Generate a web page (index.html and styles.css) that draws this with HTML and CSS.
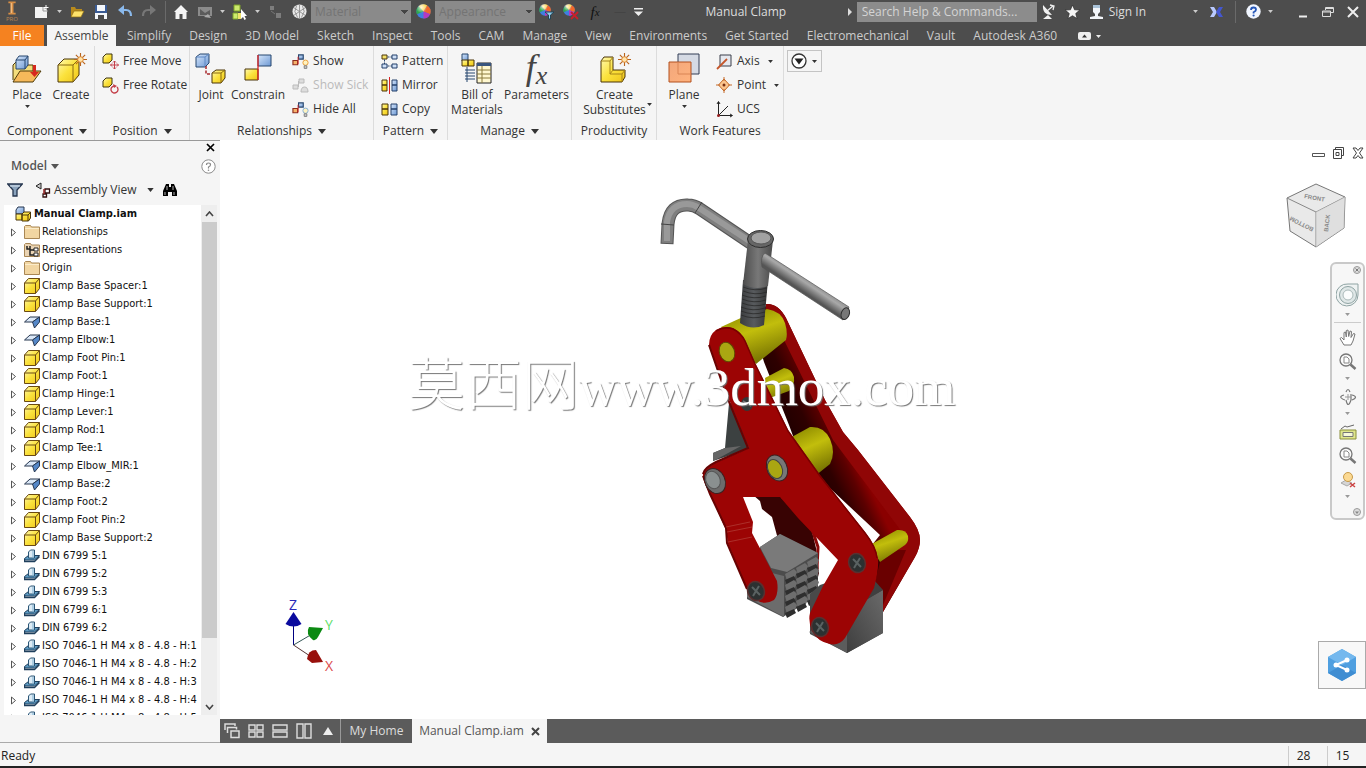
FILE: index.html
```html
<!DOCTYPE html>
<html lang="en">
<head>
<meta charset="utf-8">
<title>Manual Clamp</title>
<link rel="stylesheet" href="styles.css">
</head>
<body>
<svg class="defs" aria-hidden="true">
  <defs>
    <linearGradient id="gy" x1="0" y1="0" x2="1" y2="1"><stop offset="0" stop-color="#fff9b0"/><stop offset=".5" stop-color="#fbe23c"/><stop offset="1" stop-color="#eec31a"/></linearGradient>
    <linearGradient id="gb" x1="0" y1="0" x2="1" y2="1"><stop offset="0" stop-color="#d6e6fa"/><stop offset="1" stop-color="#6c98d4"/></linearGradient>
    <linearGradient id="go" x1="0" y1="0" x2="1" y2="1"><stop offset="0" stop-color="#f2a77c"/><stop offset="1" stop-color="#ffb27d"/></linearGradient>
    <radialGradient id="gs" cx=".4" cy=".3"><stop offset="0" stop-color="#fff"/><stop offset="1" stop-color="#fff" stop-opacity="0"/></radialGradient>
  </defs>
  <symbol id="caret" viewBox="0 0 8 5"><path d="M0 0h8L4 5z" fill="currentColor"/></symbol>
  <symbol id="cube-y" viewBox="0 0 16 16"><path d="M.5 5l4-4.500h11v10l-4 5H.5z" fill="url(#gy)" stroke="#6b4a12"/><path d="M.5 5h11v10.500M11.500 5l4-4.500" fill="none" stroke="#6b4a12"/></symbol>
  <symbol id="sheet" viewBox="0 0 16 16"><path d="M6 3h9.500l-7 5H.5z" fill="#dbe8f7" stroke="#26364f"/><path d="M15.500 3v5l-5 6-2-6z" fill="#5588c8" stroke="#26364f"/></symbol>
  <symbol id="bolt" viewBox="0 0 16 16"><path d="M.5 10.500l4-3h11l-5 4.500H.5z" fill="#5e9cc4" stroke="#1f3f5c"/><path d="M.5 11v2.500h10l5-5" fill="none" stroke="#1f3f5c" stroke-width="1.400"/><path d="M4.500 10V4l2-2h4v8z" fill="#dcebf5" stroke="#2b5575"/><path d="M9 3v7" stroke="#7fb0d0"/></symbol>
  <symbol id="folder" viewBox="0 0 16 16"><path d="M.5 14.500v-12l1-1h5l1 1.500h8v11.500z" fill="#f2d6a2" stroke="#a98755"/><path d="M1 4.500h14" stroke="#fbecca"/></symbol>
  <symbol id="folder-r" viewBox="0 0 16 16"><path d="M.5 14.500v-12l1-1h5l1 1.500h8v11.500z" fill="#ead4b4" stroke="#a98755"/><path d="M3 4v3h3M6 4v9h4M6 8h4" fill="none" stroke="#222" stroke-width="1.500"/><path d="M10 6h4v3h-4zM10 11h4v3h-4z" fill="#fff" stroke="#222"/></symbol>
  <symbol id="asm" viewBox="0 0 16 16"><path d="M1 4l2-3h6v5L7 8H1z" fill="url(#gb)" stroke="#26364f"/><path d="M1 8h6v6H1zM7 8l2-2h6.500v6l-2 3H7z" fill="url(#gy)" stroke="#4a3508"/><path d="M7 9h6v6M13 9l2-2" fill="none" stroke="#4a3508"/></symbol>
  <symbol id="burst" viewBox="0 0 14 14"><path d="M7 0v14M0 7h14M2 2l10 10M12 2L2 12" stroke="#b9641d" stroke-width="1.200"/><circle cx="7" cy="7" r="3" fill="#ffe2a8" stroke="#d9822b"/></symbol>
  <symbol id="links" viewBox="0 0 16 16"><path d="M7 2h5v4.500H7z" fill="url(#gb)" stroke="#27466e" stroke-width="1.200"/><path d="M1 8h5v4.500H1z" fill="#f6b26b" stroke="#8c2a1c" stroke-width="1.200"/><path d="M6.500 4v8" stroke="#c22"/></symbol>
  <symbol id="bulb" viewBox="0 0 8 11"><circle cx="4" cy="4" r="3" fill="#fff3bf" stroke="currentColor"/><path d="M2.500 7.500h3v3h-3z" fill="#ccc" stroke="#777"/></symbol>
  <symbol id="ball" viewBox="0 0 16 16"><circle cx="8" cy="8" r="7.500" fill="#3f7fe0"/><path d="M8 8L1 11A7.500 7.500 0 0 1 3 2.500z" fill="#2fa84f"/><path d="M8 8L3 2.500A7.500 7.500 0 0 1 12 1.500z" fill="#ffd23e"/><path d="M8 8l4-6.500A7.500 7.500 0 0 1 15 11z" fill="#f2682a"/><path d="M8 8l7 3a7.500 7.500 0 0 1-7 4.500z" fill="#b43ac0"/><circle cx="7" cy="6" r="6" fill="url(#gs)" opacity=".8"/></symbol>
  <symbol id="mag" viewBox="0 0 18 18"><circle cx="7" cy="7" r="6" fill="#fafafa" stroke="#777" stroke-width="1.300"/><path d="M5 4h3l2 2v4H5z" fill="#fff" stroke="#888"/><path d="M11.500 11.500l5 4.500" stroke="#777" stroke-width="2.500"/></symbol>
</svg>

<header class="titlebar">
  <div class="qat">
    <button class="logo" aria-label="Inventor menu"><svg width="18" height="22" viewBox="0 0 18 22"><path d="M4 2h10v2.500h-3v13h3V20H4v-2.500h3v-13H4z" fill="#d98f45"/><path d="M8 4v14" stroke="#f7c58a" stroke-width="1.500"/></svg><span>PRO</span></button>
    <button class="qb" aria-label="New"><svg width="16" height="16" viewBox="0 0 16 16"><path d="M1 3h8l4 3v8H1z" fill="#f3f3f3"/><path d="M9 3v4h5" fill="none" stroke="#999"/><path d="M12 1v5M9.500 3.500h5" stroke="#fff"/></svg></button>
    <button class="qc" aria-label="New options"><svg width="5" height="3"><use href="#caret"/></svg></button>
    <button class="qb" aria-label="Open"><svg width="16" height="16" viewBox="0 0 16 16"><path d="M2 13V3h4l1 2h6v3" fill="#b88a1c"/><path d="M5 7h10l-3 6H2z" fill="#ffe36b" stroke="#8c6a12" stroke-width=".7"/></svg></button>
    <button class="qb" aria-label="Save"><svg width="16" height="16" viewBox="0 0 16 16"><path d="M2 1h12v14H2z" fill="#f4f7fb"/><path d="M2 7h12v2H2zM2 1h2v6h8V1h2v8H2z" fill="#3a5b94"/><path d="M5 11h6v4H5z" fill="#4a4a4a"/></svg></button>
    <button class="qb" aria-label="Undo"><svg width="16" height="16" viewBox="0 0 16 16"><path d="M4 6h5q5 0 5 6" fill="none" stroke="#8ab9ec" stroke-width="2.200"/><path d="M7 1v10L1 6z" fill="#8ab9ec"/></svg></button>
    <button class="qb" aria-label="Redo"><svg width="16" height="16" viewBox="0 0 16 16"><path d="M12 6H7q-5 0-5 6" fill="none" stroke="#777" stroke-width="2.200"/><path d="M9 1v10l6-5z" fill="#777"/></svg></button>
    <span class="qsep"></span>
    <button class="qb" aria-label="Home"><svg width="16" height="16" viewBox="0 0 16 16"><path d="M8 1L1 8h1.500v7h4v-5h3v5h4V8H15z" fill="#f4f4f4"/></svg></button>
    <button class="qb" aria-label="Return"><svg width="16" height="16" viewBox="0 0 16 16"><path d="M1 3h14v9H1z" fill="#8b8b8b"/><path d="M3 5l5 4 5-3v5H3z" fill="#5b5b5b"/><path d="M7 13l4-3 3 4z" fill="#aaa"/></svg></button>
    <button class="qc" aria-label="Return options"><svg width="5" height="3"><use href="#caret"/></svg></button>
    <button class="qb" aria-label="Select"><svg width="16" height="16" viewBox="0 0 16 16"><path d="M2 1h6v6H2zM1 9h5v6H1z" fill="#cdea6d" stroke="#7fa32a"/><path d="M6 9h3v6H6z" fill="#efe36b"/><path d="M9 5v10l2-2 1.500 3 1.500-1-1.500-3H15z" fill="#fff"/></svg></button>
    <button class="qc" aria-label="Select options"><svg width="5" height="3"><use href="#caret"/></svg></button>
    <button class="qb" aria-label="Update"><svg width="16" height="16" viewBox="0 0 16 16"><path d="M3 2h4v4H3zM9 9h5v5H9z" fill="#7d7d7d"/><path d="M4 7l4 3" stroke="#777"/></svg></button>
    <button class="qb" aria-label="Material browser"><svg width="15" height="15" viewBox="0 0 16 16"><circle cx="8" cy="8" r="7.500" fill="#e9e9e9"/><path d="M8 1v14M2 4l12 8M14 4L2 12M5 1.500L3 8l3 6.500M11 1.500L13 8l-3 6.500" stroke="#888" fill="none" stroke-width=".9"/></svg></button>
    <select class="pick" aria-label="Material"><option>Material</option></select>
    <button class="qb" aria-label="Appearance browser"><svg width="15" height="15"><use href="#ball"/></svg></button>
    <select class="pick" aria-label="Appearance"><option>Appearance</option></select>
    <button class="qb" aria-label="Adjust"><svg width="16" height="16" viewBox="0 0 16 16"><use href="#ball" width="12" height="12"/><path d="M6 8h9l-3.500 3v4h-2v-4z" fill="#8fd0f2" stroke="#245"/></svg></button>
    <button class="qb" aria-label="Clear"><svg width="16" height="16" viewBox="0 0 16 16"><use href="#ball" width="12" height="12"/><path d="M8 8l7 7M15 8l-7 7" stroke="#c8202a" stroke-width="1.800"/></svg></button>
    <button class="qb fxs" aria-label="Parameters"><i>f</i><sub><i>x</i></sub></button>
    <span class="plus">—</span>
    <button class="qc" aria-label="Customize"><svg width="9" height="8" viewBox="0 0 9 8"><path d="M0 0h9v1.500H0zM0 3.500h9L4.500 8z" fill="#eee"/></svg></button>
  </div>
  <h1 class="doc">Manual Clamp</h1>
  <div class="tr">
    <svg width="4" height="8" viewBox="0 0 4 8"><path d="M0 0l4 4-4 4z" fill="#ddd"/></svg>
    <input class="search" type="search" aria-label="Search" placeholder="Search Help &amp; Commands...">
    <button class="qb" aria-label="Communication"><svg width="15" height="16" viewBox="0 0 15 16"><path d="M2 1q-1 10 9 10L7 6.500zM2 15l5-4 4 4z" fill="#f2f2f2"/><path d="M6 7l6-5M9 1l4 1-1 4" fill="none" stroke="#eee" stroke-width="1.300"/></svg></button>
    <button class="qb" aria-label="Favorites"><svg width="15" height="15" viewBox="0 0 15 15"><path d="M7.500 1l2 4.800 5.200.3-4 3.400 1.300 5-4.500-2.800L3 14.500l1.300-5-4-3.400 5.200-.3z" fill="#f6f6f6" stroke="#222" stroke-width=".6"/></svg></button>
    <button class="signin"><svg width="15" height="16" viewBox="0 0 15 16"><path d="M4 1h7v7l-2 2v2l5 1v2H1v-2l5-1v-2L4 8z" fill="#f3f6fa"/><path d="M4 1h7v3H4z" fill="#a9c2d8"/></svg>Sign In</button>
    <button class="qc" aria-label="Account options"><svg width="5" height="3"><use href="#caret"/></svg></button>
    <button class="qb xch" aria-label="Exchange apps"><svg width="14" height="12" viewBox="0 0 14 12"><path d="M0 1h4l3 5-3 5H0l3-5z" fill="#b9c9ff"/><path d="M13 1h-4L6 6l3 5h4l-3-5z" fill="#4457d0"/></svg></button>
    <span class="qsep"></span>
    <button class="qb" aria-label="Help"><svg width="15" height="15" viewBox="0 0 15 15"><circle cx="7.500" cy="7.500" r="7.200" fill="#f1f6ff"/><path d="M5 6q0-2.500 2.500-2.500T10 5.800Q10 7 7.600 8.200V9.500" fill="none" stroke="#2456b8" stroke-width="1.800"/><circle cx="7.600" cy="11.500" r="1.100" fill="#2456b8"/></svg></button>
    <button class="qc" aria-label="Help options"><svg width="5" height="3"><use href="#caret"/></svg></button>
    <div class="win">
      <button aria-label="Minimize"><svg width="12" height="12" viewBox="0 0 12 12"><path d="M2 10.500h8" stroke="#eee" stroke-width="2"/></svg></button>
      <button aria-label="Restore"><svg width="12" height="12" viewBox="0 0 12 12"><path d="M3.500 4V1.500h8v5H9M.5 5h8v5.500h-8zM.5 6h8M4 2.500h7" fill="none" stroke="#ddd"/></svg></button>
      <button aria-label="Close"><svg width="12" height="12" viewBox="0 0 12 12"><path d="M1 1l10 10M11 1L1 11" stroke="#eee" stroke-width="2"/></svg></button>
    </div>
  </div>
</header>

<nav class="tabs">
  <button class="file">File</button>
  <button class="on">Assemble</button>
  <button>Simplify</button><button>Design</button><button>3D Model</button><button>Sketch</button><button>Inspect</button><button>Tools</button><button>CAM</button><button>Manage</button><button>View</button><button>Environments</button><button>Get Started</button><button>Electromechanical</button><button>Vault</button><button>Autodesk A360</button>
  <button class="mini" aria-label="Minimize ribbon"><svg width="23" height="8" viewBox="0 0 23 8"><rect width="13" height="8" rx="2" fill="#eee"/><path d="M4 5.500l2.500-3 2.500 3z" fill="#333"/><path d="M18 3h5l-2.500 3z" fill="#eee"/></svg></button>
</nav>

<section class="ribbon">
  <div class="panel p1">
    <div class="tools">
      <button class="big"><svg width="32" height="32" viewBox="0 0 32 32"><path d="M2 27V12l3-3h5l3 3h9v7" fill="#f3dd7c" stroke="#4f3b08"/><path d="M9 18h21l-8 11H2z" fill="#f6b95a" stroke="#4f3b08"/><path d="M5 7l3-4h9v9l-3 4H5z" fill="url(#gb)" stroke="#27466e"/><path d="M5 7h9v9M14 7l3-4" fill="none" stroke="#27466e"/><path d="M22 12v7h-3l4.500 5 4.500-5h-3v-7z" fill="#d6281e"/></svg><span>Place</span><svg class="dn" width="5" height="3"><use href="#caret"/></svg></button>
      <button class="big"><svg width="32" height="32" viewBox="0 0 32 32"><path d="M3 12l6-6h15v16l-6 7H3z" fill="url(#gy)" stroke="#4a3508"/><path d="M3 12h15v17M18 12l6-6" fill="none" stroke="#8a6a12"/><use href="#burst" x="19" y="0" width="13" height="13"/></svg><span>Create</span></button>
    </div>
    <button class="cap">Component <svg width="8" height="5"><use href="#caret"/></svg></button>
  </div>
  <div class="panel p2">
    <div class="tools"><div class="rows">
      <button><svg width="17" height="17" viewBox="0 0 17 17"><path d="M1 4l3-3h6v6L7 10H1z" fill="url(#gy)" stroke="#3d3510"/><path d="M12.500 8v8M8.500 12h8M11 9.500l1.500-1.500 1.500 1.500M11 14.500l1.500 1.500 1.500-1.500M10 10.500L8.500 12l1.500 1.500M15 10.500l1.500 1.500-1.500 1.500" stroke="#c4404a" fill="none"/></svg>Free Move</button>
      <button><svg width="17" height="17" viewBox="0 0 17 17"><path d="M1 4l3-3h6v6L7 10H1z" fill="url(#gy)" stroke="#3d3510"/><path d="M12 9a3.500 3.500 0 1 0 3 1" fill="none" stroke="#c4404a" stroke-width="1.300"/><path d="M11 7l4 2-3 2z" fill="#c4404a"/></svg>Free Rotate</button>
    </div></div>
    <button class="cap">Position <svg width="8" height="5"><use href="#caret"/></svg></button>
  </div>
  <div class="panel p3">
    <div class="tools">
      <button class="big"><svg width="32" height="32" viewBox="0 0 32 32"><path d="M1 4l4-3h9v9l-4 4H1z" fill="url(#gb)" stroke="#27466e"/><path d="M1 4h9v10M10 4l4-3" fill="none" stroke="#5f88c4"/><path d="M17 20l4-3h9v8l-4 5h-9z" fill="url(#gy)" stroke="#4a3508"/><path d="M17 20h9v10M26 20l4-3" fill="none" stroke="#8a6a12"/><path d="M11 13v8h5" fill="none" stroke="#a8282c" stroke-width="1.500" stroke-dasharray="3 1.500"/></svg><span>Joint</span></button>
      <button class="big"><svg width="32" height="32" viewBox="0 0 32 32"><path d="M16 2h13v11H16z" fill="url(#gb)" stroke="#27466e"/><path d="M3 16h13v11H3z" fill="url(#gy)" stroke="#4a3508"/><path d="M16 2v25" stroke="#d22" stroke-width="1.300"/></svg><span>Constrain</span></button>
      <div class="rows">
        <button><svg width="17" height="17" viewBox="0 0 17 17"><use href="#links" width="15" height="15"/><use href="#bulb" x="10" y="6" width="7" height="10" class="warm"/></svg>Show</button>
        <button class="off" disabled><svg width="17" height="17" viewBox="0 0 17 17"><path d="M7 2h5v4H7zM1 8h5v4H1zM6.500 4v6M9 15q0-5 3.500-5t3.500 5z" fill="#ddd" stroke="#bbb"/></svg>Show Sick</button>
        <button><svg width="17" height="17" viewBox="0 0 17 17"><use href="#links" width="15" height="15"/><use href="#bulb" x="10" y="6" width="7" height="10" class="cool"/></svg>Hide All</button>
      </div>
    </div>
    <button class="cap">Relationships <svg width="8" height="5"><use href="#caret"/></svg></button>
  </div>
  <div class="panel p4">
    <div class="tools"><div class="rows">
      <button><svg width="17" height="17" viewBox="0 0 17 17"><g fill="#cfe0f7" stroke="#25406a"><path d="M1 2h5v4H1z" fill="#f5e26a" stroke="#4a3508"/><path d="M11 2h5v4h-5zM1 11h5v4H1zM11 11h5v4h-5z"/><path d="M6.500 4H11M6.500 13H11M3.500 6.500V11" stroke-dasharray="2 1"/></g></svg>Pattern</button>
      <button><svg width="17" height="17" viewBox="0 0 17 17"><path d="M1 3h5v5H1zM1 8h5v6H1z" fill="url(#gy)" stroke="#4a3508"/><path d="M11 3h5v5h-5zM11 8h5v6h-5z" fill="url(#gb)" stroke="#25406a"/><path d="M8.500 0v17" stroke="#d22"/></svg>Mirror</button>
      <button><svg width="17" height="17" viewBox="0 0 17 17"><path d="M1 3h6v5H1zM1 8h6v6H1z" fill="url(#gy)" stroke="#4a3508"/><path d="M10 3h6v5h-6zM10 8h6v6h-6z" fill="url(#gb)" stroke="#25406a"/></svg>Copy</button>
    </div></div>
    <button class="cap">Pattern <svg width="8" height="5"><use href="#caret"/></svg></button>
  </div>
  <div class="panel p5">
    <div class="tools">
      <button class="big"><svg width="32" height="32" viewBox="0 0 32 32"><path d="M1 1h6v7H1z" fill="url(#gb)" stroke="#27466e"/><path d="M1 7h6v6H1zM7 7h6v6H7z" fill="url(#gy)" stroke="#4a3508"/><path d="M4 17h10M4 20h10M4 23h10M4 26h10M6 14v15" stroke="#27466e"/><path d="M16 10h14v20H16z" fill="#fff7cf" stroke="#222"/><path d="M16 10h14v3H16z" fill="#39557e"/><path d="M16 17h14M16 21h14M16 25h14M21 13v17" stroke="#8b7a3c"/></svg><span>Bill of<br>Materials</span></button>
      <button class="big"><span class="fxb"><i>f<sub>x</sub></i></span><span>Parameters</span></button>
    </div>
    <button class="cap">Manage <svg width="8" height="5"><use href="#caret"/></svg></button>
  </div>
  <div class="panel p6">
    <div class="tools">
      <button class="big wide"><svg width="32" height="32" viewBox="0 0 32 32"><path d="M2 8l3-4h9v13h12v7l-3 5H2z" fill="url(#gy)" stroke="#4a3508"/><path d="M11 8v13h12v8M2 8h9l3-4M11 21l3-4M23 21l3-4" fill="none" stroke="#a8861a"/><use href="#burst" x="19" y="0" width="13" height="13"/></svg><span>Create<br>Substitutes</span></button>
      <svg class="side" width="5" height="3"><use href="#caret"/></svg>
    </div>
    <button class="cap">Productivity</button>
  </div>
  <div class="panel p7">
    <div class="tools">
      <button class="big"><svg width="32" height="32" viewBox="0 0 32 32"><path d="M10 1h21v20H10z" fill="#d5dae4" stroke="#333c55"/><path d="M1 9h22v20H1z" fill="url(#go)" stroke="#b3501e"/><path d="M10 9v12h13" fill="none" stroke="#d98455"/></svg><span>Plane</span><svg class="dn" width="5" height="3"><use href="#caret"/></svg></button>
      <div class="rows">
        <button><svg width="17" height="17" viewBox="0 0 17 17"><path d="M4 2h11v11H4z" fill="#e6e8ee" stroke="#3b3f4a"/><path d="M1 16L11 6" stroke="#c4562a" stroke-width="1.800"/></svg>Axis<svg class="rc" width="5" height="3"><use href="#caret"/></svg></button>
        <button><svg width="17" height="17" viewBox="0 0 17 17"><path d="M8 2l5.500 6L8 14 2.500 8z" fill="#fbc48d" stroke="#c46a2a"/><path d="M8 0v4M8 12v4M0 8h4M12 8h4" stroke="#c46a2a"/><circle cx="8" cy="8" r="1.500" fill="#7a2f12"/></svg>Point<svg class="rc" width="5" height="3"><use href="#caret"/></svg></button>
        <button><svg width="17" height="17" viewBox="0 0 17 17"><path d="M2.500 1v13.500H16M2.500 14.500L12 5" fill="none" stroke="#222"/><path d="M1 3l1.500-2.500L4 3M14 13l2.500 1.500L14 16" fill="none" stroke="#222"/><circle cx="2.500" cy="14.500" r="1.500" fill="#922"/></svg>UCS</button>
      </div>
    </div>
    <span class="cap">Work Features</span>
  </div>
  <button class="more" aria-label="Ribbon options"><svg width="27" height="16" viewBox="0 0 27 16"><circle cx="8" cy="8" r="7" fill="#fff" stroke="#333" stroke-width="1.300"/><path d="M3.500 5.500h9L8 11.500z" fill="#222"/><path d="M21 7h5l-2.500 3z" fill="#333"/></svg></button>
</section>

<div class="body">
  <aside class="browser">
    <div class="bclose"><button aria-label="Close browser"><svg width="9" height="9" viewBox="0 0 9 9"><path d="M1 1l7 7M8 1L1 8" stroke="#000" stroke-width="1.700"/></svg></button></div>
    <div class="bhead"><button class="model">Model <svg width="8" height="5"><use href="#caret"/></svg></button><button aria-label="Browser help"><svg width="15" height="15" viewBox="0 0 15 15"><circle cx="7.500" cy="7.500" r="6.700" fill="#fff" stroke="#8a8a8a"/><path d="M5.500 6q0-2 2-2t2 1.700Q9.500 7 7.500 8v1.500" fill="none" stroke="#888" stroke-width="1.200"/><circle cx="7.500" cy="11.300" r=".8" fill="#888"/></svg></button></div>
    <div class="bview">
      <button aria-label="Filter"><svg width="16" height="14" viewBox="0 0 16 14"><path d="M.7 1h14.600L10 7v6H6V7z" fill="#8aa3bd" stroke="#26364f" stroke-width="1.300"/><path d="M3 3h10" stroke="#dfe9f3"/></svg></button>
      <button class="av"><svg width="16" height="16" viewBox="0 0 16 16"><path d="M6 1L1 4l5 3z" fill="#ccc" stroke="#222"/><path d="M10 7h4.500v4H10zM8 12h3.500v3H8z" fill="#fff" stroke="#311" stroke-width="1.300"/><path d="M9 7v5" stroke="#922" stroke-width="1.500"/></svg>Assembly View<svg class="vc" width="7" height="4"><use href="#caret"/></svg></button>
      <button aria-label="Find"><svg width="16" height="14" viewBox="0 0 16 14"><path d="M4 1h3v3h2V1h3l3 7v5h-5V9H6v4H1V8z" fill="#000"/><path d="M3 9v3M12 9v3M5 3v4M11 3v4" stroke="#fff" stroke-width=".7"/></svg></button>
    </div>
    <div class="treebox">
      <ul class="tree" id="tree"></ul>
      <div class="sbar"><svg width="9" height="6" viewBox="0 0 9 6"><path d="M1 5l3.500-4L8 5" fill="none" stroke="#444" stroke-width="1.600"/></svg><span class="thumb"></span><svg width="9" height="6" viewBox="0 0 9 6"><path d="M1 1l3.500 4L8 1" fill="none" stroke="#444" stroke-width="1.600"/></svg></div>
    </div>
  </aside>

  <div class="work">
    <main class="view">
      <svg class="clamp" width="290" height="470" viewBox="640 190 290 470" role="img" aria-label="Manual clamp assembly">
        <defs>
          <linearGradient id="rod" gradientUnits="userSpaceOnUse" x1="776" y1="256" x2="768" y2="268"><stop offset="0" stop-color="#8a8a8a"/><stop offset=".4" stop-color="#a9a9a9"/><stop offset="1" stop-color="#555"/></linearGradient>
          <linearGradient id="shaft" x1="0" x2="1"><stop offset="0" stop-color="#4c4c4c"/><stop offset=".5" stop-color="#787878"/><stop offset="1" stop-color="#4a4a4a"/></linearGradient>
          <linearGradient id="thr" x1="0" x2="1"><stop offset="0" stop-color="#3a3c3e"/><stop offset=".5" stop-color="#585b5e"/><stop offset="1" stop-color="#343434"/></linearGradient>
          <linearGradient id="cyl" x1=".3" y1="0" x2=".7" y2="1"><stop offset="0" stop-color="#8f8c00"/><stop offset=".4" stop-color="#c2be0c"/><stop offset="1" stop-color="#6d6900"/></linearGradient>
          <linearGradient id="back" gradientUnits="userSpaceOnUse" x1="790" y1="455" x2="842" y2="430"><stop offset="0" stop-color="#1a0000"/><stop offset=".5" stop-color="#2e0000"/><stop offset=".8" stop-color="#5c0000"/><stop offset="1" stop-color="#8a0000"/></linearGradient>
          <linearGradient id="blk" x1="0" y1="1" x2="1" y2="0"><stop offset="0" stop-color="#3e3e3e"/><stop offset="1" stop-color="#6a6a6a"/></linearGradient>
          <g id="screw"><ellipse rx="9" ry="10.500" fill="#5a3030" transform="rotate(-20)"/><ellipse rx="7.500" ry="9" fill="#2c3131" transform="rotate(-20)"/><path d="M-4-4L4 4M3-5L-3 5" stroke="#5a6262" stroke-width="2"/></g>
        </defs>
        <path d="M766 304Q778 303 786 318L825 400L843 432L858 450L910 517Q920 530 920 540Q920 548 915 557L883 612L868 590L872 545L880 535L818 477L800 455L789 425L764 362L756 335Z" fill="url(#back)"/>
        <path d="M766 304Q778 303 786 318L825 400L843 432L858 450L910 517Q920 530 920 540Q920 548 915 557L883 612L875 588L902 544Q905 536 899 528L833 440L784 340Q776 312 766 309Z" fill="#900606"/>
        <path d="M880 562L898 550H906L883 605L873 590Z" fill="#6a0000"/>
        <path d="M753 495h30l25 20 8 33 3 25-5 20-35-50-7-26-10-8-2-8z" fill="#380303"/>
        <path d="M782 497l26 20 10 30-1 22" fill="none" stroke="#8a0808" stroke-width="3"/>
        <path d="M747 592l13-45 20-13 38 19v42l-35 22-36-18z" fill="#4c4c4c"/>
        <path d="M760 547l20-13 38 19-31 19-16-4z" fill="#7a7a7a"/>
        <path d="M768 572l16 4v41l-37-20v-8z" fill="#6c6c6c"/>
        <g id="teeth"></g>
        <path d="M810 594l10-9 30-10 33 16v42l-36 20-37-19z" fill="#494949"/>
        <path d="M809 632l38-20v41z" fill="#5c5c5c"/>
        <path d="M847 611l36-21v43l-36 20z" fill="url(#blk)"/>
        <path d="M852 588l22-8 9 10-36 21z" fill="#404040"/>
        <path d="M729 403l18 2 2 44-36 12v-8l12-5z" fill="#3c4141"/>
        <path d="M713 453l12-5 16-2-22 12-6 3z" fill="#666"/>
        <path d="M721 327l22-10 24-8q14 2 18 14 3 10 1 17l-30 24z" fill="url(#cyl)"/>
        <path d="M765 378l19-10q8 1 10 9 1 9-5 14l-22 8z" fill="url(#cyl)"/>
        <path d="M790 438l20-11q14-1 20 12 6 14 0 25l-15 12z" fill="url(#cyl)"/>
        <path d="M870 545l27-15q9-1 11 6 1 6-3 9l-25 17z" fill="url(#cyl)"/>
        <path d="M709 345q0-10 7-15 8-5 17-2 8 4 12 12l10 23 33 67 32 45 45 57q11 14 13 27 1 10-4 29l-29 50q-6 8-15 6-12-2-18-13-4-10-2-18l13-27 15-26-40-42-18-21h-37l10 25-1 11 25 48q2 13-3 19-10 6-19-1l-8-10-19-45-2-14-16-36q-8-14-7-20 2-6 14-12l32-14-21-51z" fill="#9c0404"/>
        <path d="M716 331q8-5 17-2 8 4 12 12l10 23 33 67 32 45 45 57q11 14 12 25" fill="none" stroke="#7a0000" stroke-width="1.500"/>
        <path d="M709 345l18 52 21 51-32 14q-12 6-13 12M703 476l7 18 16 34 1 15 20 46" fill="none" stroke="#680202" stroke-width="2"/>
        <path d="M726 527l24-5M727 532l25-5M728 542l24-5" stroke="#b03a34" stroke-width=".8"/>
        <ellipse cx="727" cy="352" rx="7.500" ry="10" fill="#aaa612" stroke="#5f4a00" transform="rotate(-20 727 352)"/>
        <ellipse cx="777" cy="468" rx="10" ry="13.500" fill="#777" stroke="#3c2020" transform="rotate(-25 777 468)"/>
        <ellipse cx="775" cy="469" rx="7" ry="10" fill="#aaa612" stroke="#444" transform="rotate(-25 775 469)"/>
        <ellipse cx="715" cy="481" rx="10" ry="13" fill="#6c6c6c" stroke="#3c2020" transform="rotate(-25 715 481)"/>
        <ellipse cx="713" cy="480" rx="7" ry="9" fill="#8a9090" stroke="#555" transform="rotate(-25 713 480)"/>
        <use href="#screw" x="756" y="591"/><use href="#screw" x="857" y="563"/><use href="#screw" x="820" y="627"/>
        <ellipse cx="747" cy="404" rx="6" ry="7" fill="#343838"/><path d="M743 401l8 5" stroke="#777" stroke-width="1.500"/>
        <path d="M667 244l1-20q2-20 20-19 6 0 12 4l55 37" fill="none" stroke="#555" stroke-width="13"/>
        <path d="M667 243l1-19q2-20 20-19 6 0 12 4l55 37" fill="none" stroke="#7f7f7f" stroke-width="11"/>
        <path d="M667 241l0-19q3-18 20-18 6 0 12 4l55 36" fill="none" stroke="#999" stroke-width="6"/>
        <path d="M702 202l-7 11M661 224l13 1" stroke="#444"/>
        <path d="M743 280h25l-4 45q-12 6-24-2z" fill="url(#thr)"/>
        <path d="M743 287q12 5 24 1M743 291q12 5 24 1M742 295q12 5 24 1M742 299q12 5 24 1M742 303q12 5 24 1M741 307q12 5 24 1M741 311q12 5 24 1M741 315q12 5 24 1" fill="none" stroke="#2a2a2a" stroke-width=".8"/>
        <path d="M748 240h25l-5 46q-13 5-25-2z" fill="url(#shaft)"/>
        <ellipse cx="760.500" cy="239" rx="13" ry="8.500" fill="#666" stroke="#2d2d2d"/>
        <ellipse cx="761" cy="238" rx="10" ry="6" fill="#a2a2a2" stroke="#555"/>
        <path d="M765 253l84 54-6 13-81-53q-2-10 3-14z" fill="url(#rod)" stroke="#555" stroke-width=".7"/>
        <ellipse cx="845.500" cy="313.500" rx="4" ry="6" fill="#777" stroke="#2f2f2f" transform="rotate(20 845 313)"/>
      </svg>
      <p class="mark"><span class="cjk">莫西网</span>www.3dmox.com</p>
      <svg class="triad" width="56" height="80" viewBox="282 596 56 80" role="img" aria-label="Axes">
        <path d="M293.500 645V625" stroke="#000080"/><path d="M293.500 645l17-10" stroke="#355"/><path d="M293.500 645l15 10" stroke="#533"/>
        <path d="M293.500 612l8 12q-8 5-16 0z" fill="#0a0a9e"/><path d="M323 628l-14-1q-4 7 4 13 3 1 5-3z" fill="#0b8a12"/><path d="M323 662l-7-12q-8 0-9 9l5 4z" fill="#98100c"/>
        <text x="289" y="610" fill="#2a2ab8">Z</text><text x="325" y="630" fill="#5fe06a">Y</text><text x="325" y="671" fill="#dc4a4a">X</text>
      </svg>
      <div class="mdi">
        <button aria-label="Minimize document"><svg width="13" height="12" viewBox="0 0 13 12"><path d="M.5 6.500h12v3H.5z" fill="#fff" stroke="#555"/></svg></button>
        <button aria-label="Restore document"><svg width="13" height="12" viewBox="0 0 13 12"><path d="M3.500 2.500V.5h8v8h-2M1.500 2.500h8v9h-8zM4 5.500h3v3H4z" fill="none" stroke="#444"/></svg></button>
        <button aria-label="Close document"><svg width="12" height="12" viewBox="0 0 12 12"><path d="M1 1h3l2 2.500L8 1h3L7.500 6l3.500 5H8L6 8.500 4 11H1l3.500-5z" fill="#fff" stroke="#444"/></svg></button>
      </div>
      <svg class="vcube" width="62" height="68" viewBox="0 0 62 68" role="img" aria-label="View cube">
        <path d="M31 2l29 13-1 31-28 19L5 49 2 16z" fill="#e9e9e9" stroke="#777"/><path d="M2 16l29 14 29-15M31 30v35" fill="none" stroke="#888"/><path d="M31 30l29-15-1 31-28 19z" fill="#dadada" opacity=".7"/>
        <text x="19" y="16" transform="rotate(10 19 16)">FRONT</text><text x="29" y="46" transform="rotate(207 29 46)">BOTTOM</text><text x="43" y="50" transform="rotate(-83 43 50)">BACK</text>
      </svg>
      <div class="nav">
        <button class="end" aria-label="Close navigation bar"><svg width="8" height="8" viewBox="0 0 8 8"><circle cx="4" cy="4" r="3.500" fill="#ddd" stroke="#999"/><path d="M2.500 2.500l3 3M5.500 2.500l-3 3" stroke="#777"/></svg></button>
        <button class="wheel" aria-label="Steering wheel"><svg width="24" height="24" viewBox="0 0 24 24"><path d="M12 1h10v11a11 11 0 1 1-10-11z" fill="#eef2f2" stroke="#8fa3a3"/><circle cx="12" cy="12" r="8.500" fill="#dfe7e7" stroke="#8fa3a3"/><circle cx="12" cy="12" r="5" fill="#fafcfc" stroke="#a9b8b8"/></svg></button>
        <svg class="nc" width="5" height="3"><use href="#caret"/></svg>
        <hr>
        <button aria-label="Pan"><svg width="18" height="18" viewBox="0 0 18 18"><path d="M5 16L1 9.500l1.500-1L5 11V3.500l1.500-.5.800 5V1.500L9 1l.7 6.500L11 2l1.500.5-.5 6 2.500-4L16 5l-2 7-2 4z" fill="#fff" stroke="#777"/></svg></button>
        <button aria-label="Zoom"><svg width="18" height="18"><use href="#mag"/></svg></button>
        <svg class="nc" width="5" height="3"><use href="#caret"/></svg>
        <button aria-label="Orbit"><svg width="18" height="18" viewBox="0 0 18 18"><path d="M7 4q2-5 4 0M12 6v6q-3 9-5 0M6 12q-8-3-1-5M13 7q7 2 0 5" fill="none" stroke="#777" stroke-width="1.200"/><path d="M9 6v6M6 9h6" stroke="#999"/></svg></button>
        <svg class="nc" width="5" height="3"><use href="#caret"/></svg>
        <button aria-label="Look at"><svg width="18" height="18" viewBox="0 0 18 18"><path d="M1 7h16v9H1z" fill="#dfe68d" stroke="#8a8f3a"/><path d="M4 9.500h10v4H4z" fill="#f7f9d8" stroke="#777"/><path d="M2 6l4-3 2 1 7-2" fill="none" stroke="#666"/></svg></button>
        <button aria-label="Zoom window"><svg width="18" height="18"><use href="#mag"/></svg></button>
        <button aria-label="Visual style"><svg width="18" height="18" viewBox="0 0 18 18"><path d="M2 12l5-3 6 3-5 3z" fill="#d5d5d5" stroke="#aaa"/><circle cx="9" cy="6" r="4.500" fill="#fbd992" stroke="#c79a4a"/><path d="M11 12l5 4M16 12l-5 4" stroke="#c44" stroke-width="1.500"/></svg></button>
        <svg class="nc" width="5" height="3"><use href="#caret"/></svg>
        <button class="end last" aria-label="Navigation options"><svg width="8" height="8" viewBox="0 0 8 8"><circle cx="4" cy="4" r="3.500" fill="#ddd" stroke="#999"/><path d="M2 3.500h4L4 6z" fill="#888"/></svg></button>
      </div>
      <button class="share" aria-label="Share"><svg width="30" height="34" viewBox="0 0 30 34"><path d="M15 1l14 8v16l-14 8-14-8V9z" fill="#4f9fe0"/><path d="M15 1l14 8-14 8L1 9z" fill="#74b8ee"/><path d="M15 17l14 8-14 8-14-8z" fill="#3f8dd2"/><path d="M20 12L9 17l11 5" fill="none" stroke="#fff" stroke-width="2"/><circle cx="20" cy="12" r="2.500" fill="#fff"/><circle cx="9" cy="17" r="2.500" fill="#fff"/><circle cx="20" cy="22" r="2.500" fill="#fff"/></svg></button>
    </main>
    <div class="docs">
      <button class="di" aria-label="Cascade"><svg width="16" height="16" viewBox="0 0 16 16"><path d="M1 7V1h10v2M3.500 10V4.500h9v2M7 8h8v6.500H7z" fill="none" stroke="#ddd" stroke-width="1.500"/></svg></button>
      <button class="di" aria-label="Arrange"><svg width="16" height="16" viewBox="0 0 16 16"><path d="M1 2h6v5H1zM9 2h6v5H9zM1 9h6v5H1zM9 9h6v5H9z" fill="none" stroke="#ddd" stroke-width="1.400"/></svg></button>
      <button class="di" aria-label="Tile horizontally"><svg width="16" height="16" viewBox="0 0 16 16"><path d="M1 2h14v5H1zM1 9h14v5H1z" fill="none" stroke="#ddd" stroke-width="1.400"/></svg></button>
      <button class="di" aria-label="Tile vertically"><svg width="16" height="16" viewBox="0 0 16 16"><path d="M1 1h6v14H1zM9 1h6v14H9z" fill="none" stroke="#ddd" stroke-width="1.400"/></svg></button>
      <button class="di" aria-label="Show all"><svg width="10" height="8" viewBox="0 0 10 8"><path d="M5 0l5 8H0z" fill="#eee"/></svg></button>
      <button class="home">My Home</button>
      <button class="cur">Manual Clamp.iam<svg width="9" height="9" viewBox="0 0 9 9"><path d="M1 1l7 7M8 1L1 8" stroke="#444" stroke-width="2"/></svg></button>
    </div>
  </div>
</div>
<footer class="status"><span class="ready">Ready</span><span class="num">28</span><span class="num">15</span></footer>
<script src="app.js"></script>
</body>
</html>
```
FILE: styles.css
```css
* { box-sizing: border-box; }
html, body { height: 100%; }
body { margin: 0; display: flex; flex-direction: column; overflow: hidden; background: #f5f5f5; color: #333; font: 12px/16px "Open Sans", "Noto Sans", sans-serif; border-bottom: 2px solid #222; }
button { border: 0; background: none; padding: 0; margin: 0; font: inherit; color: inherit; display: flex; align-items: center; justify-content: center; white-space: nowrap; }
svg { display: block; flex: none; }
.defs { position: absolute; width: 0; height: 0; }

.titlebar { display: flex; align-items: center; height: 25px; padding-bottom: 2px; flex: none; background: #4d4d4d; color: #ddd; }
.qat, .tr { display: flex; align-items: center; flex: none; }
.logo { flex-direction: column; width: 24px; margin-right: 6px; }
.logo svg { height: 16px; }
.logo span { font-size: 6px; line-height: 7px; color: #b88452; }
.qb { width: 24px; height: 22px; }
.qc { width: 11px; height: 22px; color: #ccc; }
.qsep { width: 1px; height: 22px; margin: 0 3px 0 4px; background: #6a6a6a; }
.pick { width: 100px; height: 22px; border: 0; border-radius: 0; appearance: none; padding: 0 4px; color: #747474; font: inherit; background-color: #8a8a8a; background-image: linear-gradient(to bottom left, #444 50%, transparent 50%), linear-gradient(to bottom right, #444 50%, transparent 50%); background-size: 4px 4px; background-position: right 6px center, right 2px center; background-repeat: no-repeat; }
.fxs { color: #111; font: 15px/16px "Liberation Serif", serif; }
.fxs sub { font-size: 11px; line-height: 8px; }
.plus { width: 26px; color: #444; text-align: center; }
.doc { flex: 1; margin: 0; text-align: center; font-size: 12px; font-weight: 400; }
.search { width: 180px; height: 20px; margin: 0 0 0 5px; border: 0; background: #8c8c8c; color: #eee; font: inherit; padding: 0 5px; }
.search::placeholder { color: #d4d4d4; opacity: 1; }
.signin { gap: 5px; margin-left: 4px; margin-right: 44px; }
.xch { margin-left: 4px; }
.tr .qsep { margin: 0 5px 0 6px; }
.win { display: flex; gap: 13px; margin: 0 7px 0 21px; }

.tabs { display: flex; align-items: stretch; height: 21px; flex: none; background: #4d4d4d; color: #ccc; }
.tabs button { padding: 0 9px; }
.tabs .file { width: 44px; margin-right: 3px; padding: 0; background: #f58220; color: #fff; }
.tabs .on { width: 69px; margin-right: 2px; background: #f5f5f5; color: #444; }
.tabs .mini { margin-left: 3px; }

.ribbon { display: flex; height: 94px; flex: none; background: #f5f5f5; }
.panel { display: flex; flex-direction: column; justify-content: space-between; border-right: 1px solid #dcdcdc; padding: 3px 0 0; }
.p1 { min-width: 95px; }
.p2 { min-width: 95px; }
.p3 { min-width: 184px; }
.p4 { min-width: 74px; }
.p5 { min-width: 124px; }
.p6 { min-width: 85px; }
.p7 { min-width: 127px; }
.tools { display: flex; align-items: flex-start; flex: 1; }
.p1 .tools { justify-content: space-between; padding: 0 3px 0 7px; }
.p3 .tools { padding-left: 1px; }
.p5 .tools { justify-content: space-between; padding: 0 2px 0 3px; }
.big { flex-direction: column; padding-top: 4px; text-align: center; line-height: 15px; min-width: 40px; }
.big > svg:first-child, .fxb { height: 32px; margin-bottom: 2px; }
.dn { margin-top: 3px; }
.fxb { font: 36px/28px "Liberation Serif", serif; color: #444; }
.fxb sub { font-size: 26px; line-height: 10px; vertical-align: -5px; }
.rows { display: flex; flex-direction: column; }
.rows button { height: 24px; gap: 4px; justify-content: flex-start; }
.p2 .rows, .p4 .rows, .p3 .rows, .p7 .rows { padding-left: 7px; }
.p7 .rows { padding-left: 5px; }
.p7 .big { min-width: 54px; }
.off { color: #bbb; }
.warm { color: #e8962e; }
.cool { color: #7aa9d8; }
.rc { margin-left: 4px; }
.wide { margin: 0 auto; padding-left: 10px; }
.side { margin: 54px 4px 0 0; }
.cap { display: flex; align-items: center; justify-content: center; gap: 6px; height: 18px; line-height: 18px; }
.more { width: 35px; height: 22px; margin: 4px 0 0 3px; border: 1px solid #c4c4c4; }

.body { display: flex; flex: 1; min-height: 0; }
.browser { display: flex; flex-direction: column; width: 220px; flex: none; background: #f5f5f5; border-top: 1px solid #999; padding-bottom: 27px; border-bottom: 1px solid #aaa; }
.bclose { display: flex; justify-content: flex-end; padding: 2px 5px; }
.bhead { display: flex; justify-content: space-between; align-items: center; height: 24px; padding: 0 4px 0 11px; }
.model { color: #555; font-weight: 600; gap: 4px; }
.bview { display: flex; align-items: center; height: 24px; margin-bottom: 3px; padding-left: 7px; gap: 12px; }
.av { gap: 3px; }
.bview .vc { margin-left: 7px; }
.bview button:last-child { margin-left: -4px; }
.treebox { display: flex; flex: 1; min-height: 0; margin: 0 3px 0 4px; background: #fff; overflow: hidden; }
.tree { flex: 1; margin: 0; padding: 0; list-style: none; overflow: hidden; color: #111; font: 11px/18px "DejaVu Sans Condensed", "DejaVu Sans", sans-serif; }
.tree li { display: flex; align-items: center; height: 18px; padding-left: 7px; white-space: nowrap; }
.tree li button { width: 5px; height: 9px; margin-right: 8px; }
.tree li > svg { margin-right: 2px; }
.tree .root { padding-left: 11px; font-weight: 700; }
.tree .root > svg { margin-right: 3px; }
.sbar { display: flex; flex-direction: column; align-items: center; justify-content: space-between; width: 16px; background: #eee; padding: 6px 0 5px; }
.thumb { flex: 1; width: 15px; margin: 5px 0 66px; background: #cbcbcb; }

.work { display: flex; flex-direction: column; flex: 1; min-width: 0; }
.view { position: relative; flex: 1; background: #fff; overflow: hidden; }
.clamp { position: absolute; left: 420px; top: 50px; }
.mark { position: absolute; left: 188px; top: 204px; margin: 0; display: flex; align-items: baseline; color: #fff; white-space: nowrap; font: 53px/72px "Liberation Serif", serif; text-shadow: 1px 1px 1px #777; }
.cjk { font: 57px/72px "Noto Sans CJK SC", sans-serif; font-weight: 300; }
.triad { position: absolute; left: 62px; bottom: 43px; font: 14px "Open Sans", sans-serif; }
.mdi { position: absolute; right: 2px; top: 7px; display: flex; gap: 7px; }
.vcube { position: absolute; right: 19px; top: 42px; font: 700 6px "Liberation Sans", sans-serif; }
.vcube text { fill: #888; }
.nav { position: absolute; right: 1px; top: 122px; width: 35px; height: 258px; display: flex; flex-direction: column; align-items: center; gap: 6px; padding: 2px; background: #f7f7f7; border: 2px solid #c9c9c9; border-radius: 6px; color: #999; }
.nav .end { align-self: flex-end; }
.nav .last { margin-top: auto; }
.nav .wheel { margin-top: 3px; }
.nav .nc { margin-bottom: 2px; }
.nav .wheel + .nc { margin-bottom: 0; }
.nav hr { width: 100%; height: 1px; margin: 0; border: 0; background: #ccc; }
.share { position: absolute; right: 0; bottom: 30px; width: 48px; height: 48px; background: #f8f8f8; border: 1px solid #aaa; }
.docs { display: flex; height: 24px; flex: none; background: #5b5b5b; color: #ddd; }
.di { width: 24px; }
.home { width: 72px; border-left: 1px solid #999; }
.cur { width: 135px; gap: 7px; background: #f5f5f5; color: #555; }

.status { display: flex; align-items: center; height: 23px; padding-top: 2px; flex: none; color: #222; }
.ready { flex: 1; padding-left: 1px; }
.num { width: 39px; line-height: 20px; text-align: center; border-left: 1px solid #ccc; padding-right: 9px; }
```
FILE: app.js
```js
const items = [
  ['folder', 'Relationships'], ['folder-r', 'Representations'], ['folder', 'Origin'],
  ['cube-y', 'Clamp Base Spacer:1'], ['cube-y', 'Clamp Base Support:1'],
  ['sheet', 'Clamp Base:1'], ['sheet', 'Clamp Elbow:1'],
  ['cube-y', 'Clamp Foot Pin:1'], ['cube-y', 'Clamp Foot:1'], ['cube-y', 'Clamp Hinge:1'],
  ['cube-y', 'Clamp Lever:1'], ['cube-y', 'Clamp Rod:1'], ['cube-y', 'Clamp Tee:1'],
  ['sheet', 'Clamp Elbow_MIR:1'], ['sheet', 'Clamp Base:2'],
  ['cube-y', 'Clamp Foot:2'], ['cube-y', 'Clamp Foot Pin:2'], ['cube-y', 'Clamp Base Support:2'],
  ['bolt', 'DIN 6799 5:1'], ['bolt', 'DIN 6799 5:2'], ['bolt', 'DIN 6799 5:3'],
  ['bolt', 'DIN 6799 6:1'], ['bolt', 'DIN 6799 6:2'],
  ['bolt', 'ISO 7046-1 H M4 x 8 - 4.8 - H:1'], ['bolt', 'ISO 7046-1 H M4 x 8 - 4.8 - H:2'],
  ['bolt', 'ISO 7046-1 H M4 x 8 - 4.8 - H:3'], ['bolt', 'ISO 7046-1 H M4 x 8 - 4.8 - H:4'],
  ['bolt', 'ISO 7046-1 H M4 x 8 - 4.8 - H:5']
];
const icon = (id) => `<svg width="16" height="16"><use href="#${id}"/></svg>`;
document.getElementById('tree').innerHTML =
  `<li class="root">${icon('asm')}Manual Clamp.iam</li>` +
  items.map(([id, name]) =>
    `<li><button aria-label="Expand ${name}"><svg width="5" height="9" viewBox="0 0 5 9"><path d="M.5 1v7l4-3.500z" fill="#fff" stroke="#555"/></svg></button>${icon(id)}<span>${name}</span></li>`
  ).join('');

// Serrated face of the clamp foot: four rows of three teeth.
let teeth = '';
for (let r = 0; r < 4; r++) {
  for (let c = 0; c < 3; c++) {
    const x = 785 + c * 11, y = 574 + r * 11 - c * 6;
    teeth += `<path d="M${x} ${y}l9-5 3 3-2 5-8 4z" fill="#6e6e6e"/><path d="M${x} ${y + 6}l9-4 2 4-9 5z" fill="#2e2e2e"/>`;
  }
}
document.getElementById('teeth').innerHTML = teeth;
```
